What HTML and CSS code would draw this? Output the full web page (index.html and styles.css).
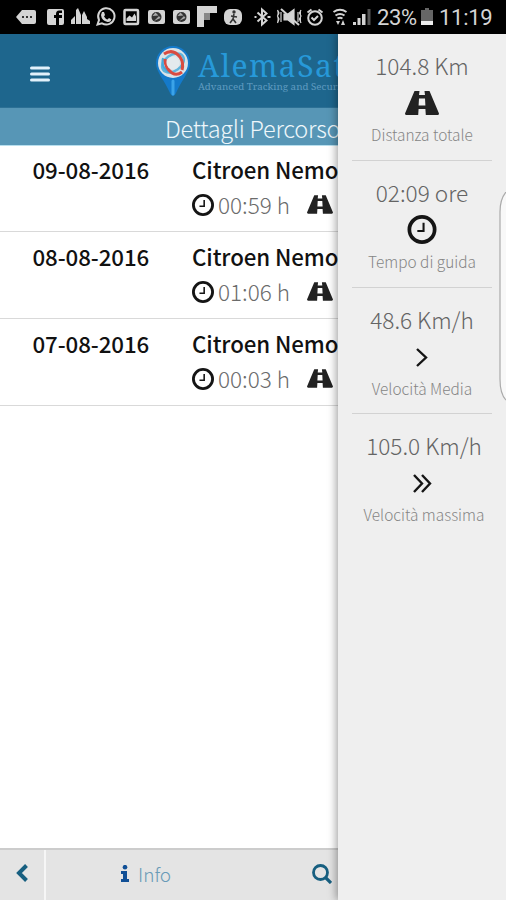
FILE: index.html
```html
<!DOCTYPE html>
<html lang="it">
<head>
<meta charset="utf-8">
<title>Dettagli Percorso</title>
<link rel="stylesheet" href="styles.css">
</head>
<body>
<svg class="defs" width="0" height="0" aria-hidden="true">
  <symbol id="road" viewBox="0 0 34 24"><path d="M9.500 0H14.500L14 4H20L19.500 0H24.500L34 22.500Q34 24 32.500 24H20.800L20.400 18H13.600L13.200 24H1.500Q0 24 0 22.500ZM14 7.500L13.600 14.500H20.400L20 7.500Z" fill-rule="evenodd"/></symbol>
  <symbol id="clock" viewBox="0 0 28 28"><circle cx="14" cy="14" r="12.200" fill="none" stroke="currentColor" stroke-width="3.600"/><path d="M15.500 7.500V15.500H9.500" fill="none" stroke="currentColor" stroke-width="2"/></symbol>
</svg>
<div class="status">
  <svg class="status-icons" viewBox="0 0 374 34" fill="#d4d4d4">
    <path d="M16 17L22 10H34Q36 10 36 12V22Q36 24 34 24H22Z"/><path d="M22 17h2m2 0h2m2 0h2" stroke="#333" stroke-width="2"/>
    <path d="M49 9H62Q64 9 64 11V23Q64 25 62 25H59V18H62V15H59V13H62V10.500H59Q56 10.500 56 14V15H54V18H56V25H49Q47 25 47 23V11Q47 9 49 9Z"/>
    <path d="M71 24V20L75 16V24ZM76 24V10L78 8L81 15V24ZM82 24V15L84 11L87 17V24ZM87 24V19L90 21V24Z"/>
    <path d="M97.500 24.500L99 20A8.200 8.200 0 1 1 102 23.300Z" fill="none" stroke="#d4d4d4" stroke-width="2"/><path d="M102 12l2 0 1 3-1 1.500q1.500 2.500 3.500 3l1.500-1.500 2.500 1.500q-1 3-4 2.500-6-1.500-6.500-7z"/>
    <rect x="124.500" y="10" width="13.500" height="14" rx="1" fill="none" stroke="#d4d4d4" stroke-width="2.500"/><path d="M126.500 21v-2.500l3-3 2.500 2 2.500-4 1.500 3V21z"/>
    <g id="cam"><rect x="148" y="10" width="17" height="14" rx="2"/><circle cx="156.500" cy="17" r="5" fill="#333"/><path d="M152.500 16l3-3.500 3 3zM154 21l5-5 1.500 2z" fill="#aaa"/></g>
    <use href="#cam" x="25"/>
    <path d="M197 6H217V13H210V20H204V27H197Z"/><path d="M204 13H210V20H204Z" fill="#888"/>
    <rect x="224" y="9" width="18" height="16" rx="6"/><circle cx="234" cy="12" r="1.700" fill="#333"/><path d="M234 14l-1 5 3 4M233 19l-3 4M231 16l6 1" fill="none" stroke="#333" stroke-width="1.600"/>
    <path d="M257.500 12.500l9 8-4.500 4V9.500l4.500 4-9 8M254.500 17h2m11 0h3" fill="none" stroke="#d4d4d4" stroke-width="2"/>
    <path d="M284 14h4l6-4.500v15L288 20h-4zM277.500 10l1.500 3-1.500 3 1.500 3-1.500 4M281 12v10M298 12v10M301 10l-1.500 3 1.500 3-1.500 3 1.500 4" stroke="#d4d4d4" stroke-width="1.200"/><path d="M281 9L299 25" stroke="#d4d4d4" stroke-width="2"/>
    <circle cx="315" cy="18" r="6.800" fill="none" stroke="#d4d4d4" stroke-width="2"/><path d="M311.500 17.500l2.500 2.500 4-4M307.500 12.500l4-3M322.500 12.500l-4-3" fill="none" stroke="#d4d4d4" stroke-width="2"/>
    <path d="M333.500 12q6.500-4.500 13 0M335.500 15.500q4.500-3 9 0M337.500 18.500q2.500-1.500 5 0" fill="none" stroke="#d4d4d4" stroke-width="2"/><path d="M336 21h4l-2 4zM341 25h4l-2-5z"/>
    <path d="M353 25v-3h3v3zM357.500 25v-7h3v7zM362 25V14h3.500v11z"/><path d="M367.500 25V9h3v16z" fill="#555"/>
  </svg>
  <span class="percent">23%</span>
  <svg class="battery" viewBox="0 0 14 18"><path d="M5 0h4v2h4v15H1V2h4z" fill="#666"/><path d="M1 13h12v4H1z" fill="#eee"/></svg>
  <span class="time">11:19</span>
</div>
<div class="app">
  <main class="page">
    <header class="header">
      <svg class="menu" viewBox="0 0 20 16"><path d="M1.500 2h17M1.500 8h17M1.500 14h17" stroke="#e2f1fb" stroke-width="3" stroke-linecap="round"/></svg>
      <svg class="pin" viewBox="0 0 36 52">
        <path d="M18 1C8 1 1 9 1 18C1 27 10 36 15 48Q18 54 21 48C26 36 35 27 35 18C35 9 28 1 18 1Z" fill="#147acb"/>
        <path d="M18 36v13" stroke="#3ba3e8" stroke-width="3" stroke-linecap="round"/>
        <circle cx="18" cy="18" r="15" fill="#dae3e8"/>
        <ellipse cx="18" cy="18" rx="12" ry="8" transform="rotate(-35 18 18)" fill="none" stroke="#5fb4dc" stroke-width="2.500"/>
        <path d="M8 13Q5 23 16 28" fill="none" stroke="#43a9dc" stroke-width="2"/>
        <path d="M9 9Q18 3 25 12Q29 18 27 25M10 14Q10 23 17 28Q22 31 27 27" fill="none" stroke="#d94b40" stroke-width="3"/>
        <circle cx="18" cy="18" r="6.500" fill="#e4eaed"/>
      </svg>
      <div class="brand"><div class="name">AlemaSat</div><div class="tagline">Advanced Tracking and Security</div></div>
    </header>
    <h1 class="title">Dettagli Percorso</h1>
    <section class="trips">
      <article class="trip"><div class="date">09-08-2016</div><div><div class="car">Citroen Nemo</div><div class="meta"><svg class="clock"><use href="#clock"/></svg><span>00:59 h</span><svg class="road"><use href="#road"/></svg></div></div></article>
      <article class="trip"><div class="date">08-08-2016</div><div><div class="car">Citroen Nemo</div><div class="meta"><svg class="clock"><use href="#clock"/></svg><span>01:06 h</span><svg class="road"><use href="#road"/></svg></div></div></article>
      <article class="trip"><div class="date">07-08-2016</div><div><div class="car">Citroen Nemo</div><div class="meta"><svg class="clock"><use href="#clock"/></svg><span>00:03 h</span><svg class="road"><use href="#road"/></svg></div></div></article>
    </section>
    <footer class="footer">
      <div class="back"><svg viewBox="0 0 12 18"><path d="M10.500 1.500L3 9l7.500 7.500" fill="none" stroke="#175f80" stroke-width="4"/></svg></div>
      <div class="info"><svg viewBox="0 0 8 17"><circle cx="4" cy="2.200" r="2.300"/><path d="M0 6h6v8h2v3H0v-3h2V9H0z"/></svg><span>Info</span></div>
      <svg class="search" viewBox="0 0 20 20"><circle cx="8.500" cy="8.500" r="7" fill="none" stroke="#175f80" stroke-width="2.800"/><path d="M13.500 13.500l5.500 5.500" stroke="#175f80" stroke-width="3.200"/></svg>
    </footer>
  </main>
  <aside class="drawer">
    <div class="stat"><div class="value">104.8 Km</div><svg class="icon"><use href="#road" x="0" y="3" width="34" height="24"/></svg><div class="label">Distanza totale</div></div>
    <div class="stat"><div class="value">02:09 ore</div><svg class="icon"><use href="#clock" x="2" y="0" width="30" height="29"/></svg><div class="label">Tempo di guida</div></div>
    <div class="stat"><div class="value">48.6 Km/h</div><svg class="icon"><path d="M12 7l9 8.500-9 8.500" fill="none" stroke="#151515" stroke-width="2.400"/></svg><div class="label">Velocità Media</div></div>
    <div class="stat wide"><div class="value">105.0 Km/h</div><svg class="icon"><path d="M9 7l8 8.500-8 8.500M17 7l8 8.500-8 8.500" fill="none" stroke="#151515" stroke-width="2.400"/></svg><div class="label">Velocità massima</div></div>
    <svg class="edge" viewBox="0 0 7 210"><path d="M7 0Q1 7 1 20V187Q1 202 7 208" fill="#f8f8f8" stroke="#aaa" stroke-width="1.200"/></svg>
  </aside>
</div>
</body>
</html>
```
FILE: styles.css
```css
* { box-sizing: border-box; }
body { margin: 0; width: 506px; height: 900px; overflow: hidden; display: flex; flex-direction: column; background: #fff; font-family: "Noto Sans CJK JP", "Noto Sans", sans-serif; font-weight: 300; color: #111; }
svg { display: block; flex: none; }
.defs { position: absolute; }
.status { height: 34px; flex: none; display: flex; align-items: center; background: #000; color: #d4d4d4; font: 400 22px/34px Roboto, sans-serif; white-space: nowrap; }
.status-icons { width: 374px; height: 34px; }
.percent { width: 46px; padding: 1px 0 0 3px; letter-spacing: -.4px; }
.battery { width: 14px; height: 18px; }
.time { padding: 1px 0 0 5px; letter-spacing: -.3px; }
.app { position: relative; flex: 1; overflow: hidden; }
.page { height: 866px; display: flex; flex-direction: column; }
.header { height: 74px; flex: none; display: flex; background: #1e668d; border-bottom: 1px solid #2c7095; }
.menu { width: 20px; height: 16px; margin: 32px 0 0 30px; }
.pin { width: 36px; height: 52px; margin: 11px 0 0 105px; }
.brand { margin: 17px 0 0 7px; font-family: "Noto Serif", "DejaVu Serif", "Liberation Serif", serif; font-weight: 400; white-space: nowrap; color: #2799d9; }
.name { font-size: 30px; line-height: 29px; letter-spacing: 1.500px; }
.tagline { margin-top: 1px; font-size: 9.800px; line-height: 12px; color: #5f9bc0; }
.title { margin: 0; height: 38px; flex: none; background: #5796b6; border-bottom: 1px solid #b8dfee; color: #eef7fb; font-size: 23.500px; font-weight: 300; line-height: 41px; padding-left: 165px; letter-spacing: -.25px; white-space: nowrap; }
.trips { flex: 1; }
.trip { height: 87.300px; display: grid; grid-template-columns: 192px 1fr; border-bottom: 1px solid #d9d9d9; padding-top: 8px; margin-top: -1px; white-space: nowrap; }
.trip + .trip { height: 87px; margin-top: 0; }
.date { padding-left: 32.500px; font-size: 22.300px; font-weight: 500; line-height: 32px; letter-spacing: -.1px; }
.car { font-size: 22.300px; font-weight: 500; line-height: 32px; letter-spacing: -.1px; }
.meta { display: flex; align-items: center; height: 38px; padding-top: 1px; color: #6b6b6b; font-size: 22.500px; line-height: 37px; }
.clock { width: 22px; height: 22px; color: #151515; margin-right: 4px; }
.meta span { width: 89px; }
.road { width: 26px; height: 19px; fill: #222; }
.footer { height: 52px; flex: none; display: flex; align-items: center; background: #e4e4e4; border-top: 2px solid #ccc; }
.back { width: 46px; height: 50px; border-right: 2px solid #f6f6f6; padding: 14px 0 0 16px; }
.back svg { width: 12px; height: 18px; }
.info { width: 266px; display: flex; align-items: center; padding: 0 0 4px 75px; gap: 9px; font-size: 19px; line-height: 43px; color: #699bb7; }
.info svg { width: 8px; height: 17px; fill: #104f96; }
.search { width: 20px; height: 20px; margin-top: -2px; }
.drawer { position: absolute; left: 338px; top: 0; width: 168px; height: 866px; background: #efefef; box-shadow: -2px 0 8px rgba(0,0,0,.35); padding: 0 14px; }
.stat { height: 126.500px; border-bottom: 1px solid #d2d2d2; display: flex; flex-direction: column; align-items: center; padding-top: 15px; white-space: nowrap; }
.stat:first-child { height: 127.200px; }
.stat.wide { border-bottom: 0; padding-left: 4px; padding-top: 14.500px; }
.stat.wide .icon { margin-left: -4px; }
.value { font-size: 22.600px; line-height: 34px; color: #646464; }
.icon { width: 34px; height: 29px; margin-top: 5px; fill: #222; color: #151515; }
.label { font-size: 15.400px; line-height: 24px; margin-top: 5px; color: #858585; }
.edge { position: absolute; right: 0; top: 158px; width: 7px; height: 210px; }
```
